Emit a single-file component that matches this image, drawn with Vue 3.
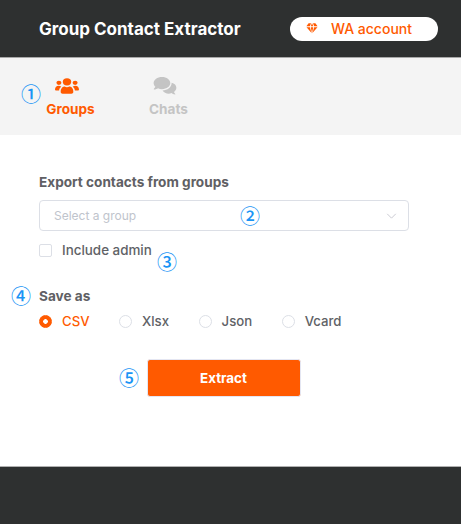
<script setup>
const formats = [
  { label: 'CSV', active: true },
  { label: 'Xlsx', active: false },
  { label: 'Json', active: false },
  { label: 'Vcard', active: false }
]
</script>

<template>
  <div class="page">
    <header class="top">
      <h1 class="title">Group Contact Extractor</h1>
      <button class="account">
        <svg class="gem" viewBox="0 0 12 11" width="12" height="11">
          <path d="M2.6 0.3H5L3.9 3.2H0.4ZM7 0.3H9.4L11.6 3.2H8.1ZM5.9 0.3H6.1L7.2 3.2H4.8ZM0.5 4.2H3.9L5.4 9.8ZM4.8 4.2H7.2L6 10.4ZM8.1 4.2H11.5L6.6 9.8Z" fill="#ff5a00" />
        </svg>
        <span>WA account</span>
      </button>
    </header>

    <nav class="tabs">
      <div class="tab on">
        <svg class="ico people" viewBox="0 0 24 18.6" width="24" height="16" preserveAspectRatio="none">
          <circle cx="12" cy="4.4" r="4.2" fill="#ff5a00" />
          <circle cx="3.9" cy="5.6" r="2.5" fill="#ff5a00" />
          <circle cx="20.1" cy="5.6" r="2.5" fill="#ff5a00" />
          <path d="M0 13.6C0 10.6 1.6 9 3.6 9C4.7 9 5.6 9.4 6.3 10.1C5 11.2 4.3 12.6 4.1 14.4H1C.4 14.4 0 14.1 0 13.6ZM24 13.6C24 14.1 23.6 14.4 23 14.4H19.9C19.7 12.6 19 11.2 17.7 10.1C18.4 9.4 19.3 9 20.4 9C22.4 9 24 10.6 24 13.6ZM5.7 15.8C5.7 12.6 7.4 10 9.6 10C10.4 10.5 11.2 10.7 12 10.7C12.8 10.7 13.6 10.5 14.4 10C16.6 10 18.3 12.6 18.3 15.8V16.4C18.3 17.6 17.5 18.4 16.4 18.4H7.6C6.5 18.4 5.7 17.6 5.7 16.4Z" fill="#ff5a00" />
        </svg>
        <span>Groups</span>
      </div>
      <div class="tab">
        <svg class="ico" viewBox="0 0 24 19" width="24" height="18">
          <path d="M8.8 0C3.9 0 0 2.9 0 6.4C0 7.9 .7 9.3 1.8 10.4C1.3 11.5 .4 12.4 .2 12.6C0 12.8 .2 13.1 .5 13.1C2.1 13.1 3.6 12.5 4.6 11.8C5.8 12.4 7.3 12.8 8.8 12.8C13.7 12.8 17.6 9.9 17.6 6.4C17.6 2.9 13.7 0 8.8 0Z" fill="#c4c4c4" />
          <path d="M19 6.2C19.1 11 14.4 14.2 9.4 14.3C10.6 16.3 13.1 17.6 15.9 17.6C17 17.6 18 17.4 18.9 17C19.7 17.7 21 18.4 22.6 18.4C22.9 18.4 23.1 18.1 22.9 17.9C22.7 17.7 21.9 16.8 21.5 15.8C23 14.7 24 13.1 24 11.4C24 9 21.9 6.9 19 6.2Z" fill="#c4c4c4" />
        </svg>
        <span>Chats</span>
      </div>
      <span class="mark m1">①</span>
    </nav>

    <main class="body">
      <section class="field">
        <label class="label">Export contacts from groups</label>
        <div class="select">
          <span>Select a group</span>
          <svg viewBox="0 0 12 7" width="11" height="6">
            <path d="M1 1L6 6L11 1" fill="none" stroke="#c8c8d0" stroke-width="1.1" />
          </svg>
          <span class="mark m2">②</span>
        </div>
        <div class="check">
          <i class="box"></i>
          <span>Include admin</span>
          <span class="mark m3">③</span>
        </div>
      </section>

      <section class="save">
        <label class="label">Save as</label>
        <span class="mark m4">④</span>
        <div class="radios">
          <div v-for="f in formats" :key="f.label" class="radio" :class="{ on: f.active }">
            <i class="dot"></i>
            <span>{{ f.label }}</span>
          </div>
        </div>
      </section>

      <div class="action">
        <span class="mark m5">⑤</span>
        <button class="extract">Extract</button>
      </div>
    </main>

    <footer class="bottom"></footer>
  </div>
</template>

<style>
html, body { margin: 0; background: #fff; }
</style>

<style scoped>
.page {
  width: 461px;
  height: 524px;
  display: flex;
  flex-direction: column;
  overflow: hidden;
  font-family: Inter, "Liberation Sans", sans-serif;
  color: #606266;
}
.top {
  height: 58px;
  flex: none;
  box-sizing: border-box;
  background: #2e3030;
  border-bottom: 1px solid #a8a8a8;
  display: flex;
  align-items: center;
  justify-content: space-between;
  padding: 0 23px 0 39px;
}
.title {
  margin: 0;
  font-size: 17px;
  font-weight: 700;
  color: #fff;
}
.account {
  width: 148px;
  height: 24px;
  box-sizing: border-box;
  border: 0;
  border-radius: 12px;
  background: #fff;
  color: #ff5a00;
  font: 500 14px Inter, "Liberation Sans", sans-serif;
  display: flex;
  align-items: center;
  padding: 0 0 0 16px;
  gap: 13px;
}
.tabs {
  position: relative;
  height: 77px;
  flex: none;
  background: #f4f4f4;
  display: flex;
  padding-left: 46px;
  gap: 49px;
}
.tab {
  width: 49px;
  padding-top: 19px;
  display: flex;
  flex-direction: column;
  align-items: center;
  gap: 6px;
  font-size: 13.6px;
  font-weight: 700;
  color: #c4c4c4;
}
.tab.on { color: #ff5a00; }
.ico { margin-right: 7px; }
.people { margin-top: 1px; margin-bottom: 1px; }
.body {
  flex: 1;
  padding: 38px 52px 0 39px;
}
.label {
  display: block;
  font-size: 13.6px;
  font-weight: 700;
  line-height: 18px;
  color: #5f6064;
}
.select {
  position: relative;
  margin-top: 9px;
  height: 31px;
  box-sizing: border-box;
  border: 1px solid #dcdfe6;
  border-radius: 4px;
  display: flex;
  align-items: center;
  justify-content: space-between;
  padding: 0 11px 0 14px;
  font-size: 12px;
  color: #c0c4cc;
}
.check {
  position: relative;
  margin-top: 11px;
  display: flex;
  align-items: center;
  gap: 10px;
  height: 16px;
  font-size: 13.4px;
  font-weight: 500;
}
.box {
  width: 11px;
  height: 11px;
  border: 1px solid #dcdfe6;
  border-radius: 2px;
}
.save {
  position: relative;
  margin-top: 29px;
}
.radios {
  display: flex;
  gap: 29.5px;
  margin-top: 7px;
  height: 18px;
}
.radio {
  display: flex;
  align-items: center;
  gap: 10px;
  font-size: 13.2px;
  font-weight: 500;
}
.radio.on { color: #ff5a00; }
.dot {
  width: 11px;
  height: 11px;
  border: 1px solid #dcdfe6;
  border-radius: 50%;
  flex: none;
}
.radio.on .dot {
  border-color: #ff5a00;
  background: radial-gradient(circle, #fff 0 2px, #ff5a00 2.6px);
}
.action {
  position: relative;
  margin-top: 29px;
  display: flex;
  justify-content: center;
  padding-right: 1px;
}
.extract {
  width: 154px;
  height: 38px;
  border: 1px solid #e4e6f2;
  border-radius: 3px;
  background: #ff5a00;
  color: #fff;
  font: 700 13.4px Inter, "Liberation Sans", sans-serif;
}
.bottom {
  height: 58px;
  flex: none;
  box-sizing: border-box;
  background: #2e3030;
  border-top: 1px solid #b0b0b0;
}
.mark {
  position: absolute;
  font-family: "Noto Sans CJK JP", sans-serif;
  font-size: 20px;
  font-weight: 500;
  line-height: 20px;
  color: #1a94f5;
}
.m1 { left: 21px; top: 26px; }
.m2 { left: 200px; top: 5px; }
.m3 { left: 118px; top: 10px; }
.m4 { left: -28px; top: -1px; }
.m5 { left: 80px; top: 9px; }
</style>
